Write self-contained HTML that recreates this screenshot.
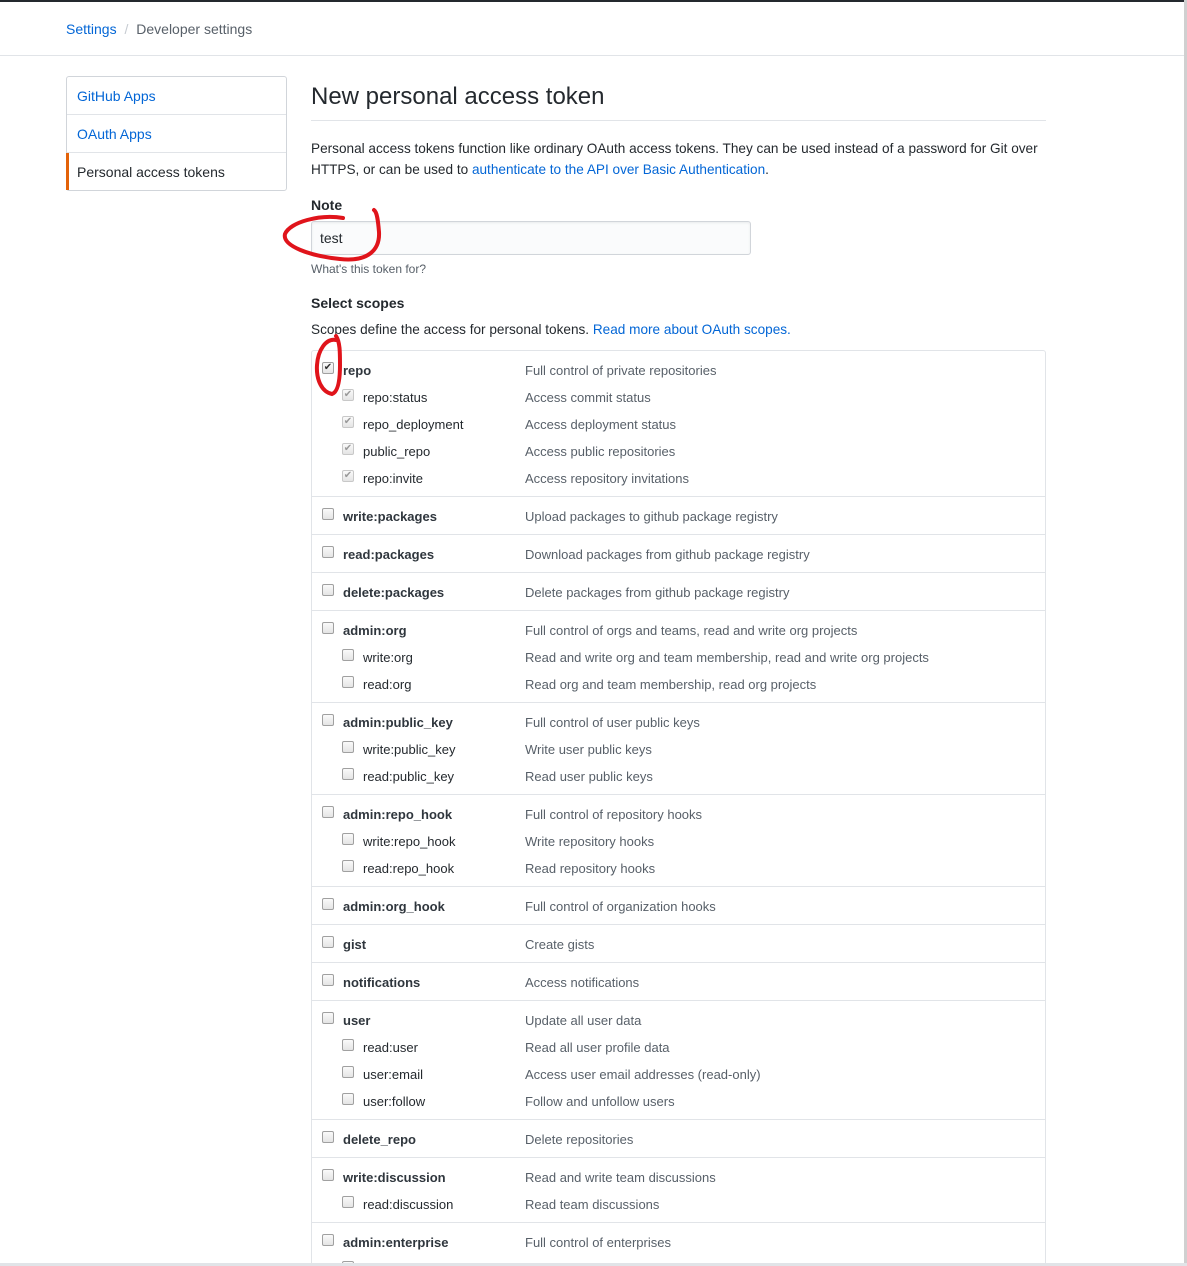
<!DOCTYPE html>
<html style="width:1187px;height:1266px;overflow:hidden"><head><meta charset="utf-8"><style>
*{margin:0;padding:0;box-sizing:border-box}
body{width:1187px;height:1266px;background:#fff;font-family:"Liberation Sans",sans-serif;color:#24292e;position:relative;overflow:hidden}
.a{position:absolute;white-space:nowrap}
.l{color:#0366d6}
.t{position:absolute;font-size:13px;line-height:18px;white-space:nowrap;margin-top:1px}
.n{font-weight:bold;color:#2f363d;left:343px}
.s{color:#24292e;left:363px}
.d{color:#586069;left:525px}
.cb{position:absolute;width:12px;height:12px;border:1px solid #a0a0a0;border-radius:2px;background:linear-gradient(#fafafa,#e4e4e4)}
.ck{font-size:10px;line-height:10px;text-align:center;color:#333}
.ck.g{color:#9a9a9a;border-color:#c8c8c8}
.hr{position:absolute;left:312px;width:733px;height:1px;background:#e1e4e8}
</style></head><body>
<div class="a" style="left:0;top:0;width:1187px;height:2px;background:#24292e"></div>
<div class="a" style="left:1184px;top:0;width:3px;height:1266px;background:#d0d0d0"></div>
<div class="a" style="left:66px;top:20px;font-size:14px;line-height:18px"><span class="l">Settings</span> <span style="color:#c6cbd1;margin:0 4px">/</span> <span style="color:#586069">Developer settings</span></div>
<div class="a" style="left:0;top:55px;width:1184px;height:1px;background:#e1e4e8"></div>

<div class="a" style="left:66px;top:76px;width:221px;height:115px;border:1px solid #d1d5da;border-radius:3px"></div>
<div class="a" style="left:67px;top:114px;width:219px;height:1px;background:#e1e4e8"></div>
<div class="a" style="left:67px;top:152px;width:219px;height:1px;background:#e1e4e8"></div>
<div class="a" style="left:66px;top:153px;width:3px;height:37px;background:#e36209"></div>
<div class="a l" style="left:77px;top:87px;font-size:14px;line-height:18px">GitHub Apps</div>
<div class="a l" style="left:77px;top:125px;font-size:14px;line-height:18px">OAuth Apps</div>
<div class="a" style="left:77px;top:163px;font-size:14px;line-height:18px">Personal access tokens</div>

<div class="a" style="left:311px;top:82px;font-size:24px;line-height:30px">New personal access token</div>
<div class="a" style="left:311px;top:120px;width:735px;height:1px;background:#e1e4e8"></div>
<div class="a" style="left:311px;top:138px;font-size:13.6px;line-height:21px">Personal access tokens function like ordinary OAuth access tokens. They can be used instead of a password for Git over<br>HTTPS, or can be used to <span class="l">authenticate to the API over Basic Authentication</span>.</div>
<div class="a" style="left:311px;top:196px;font-size:14px;font-weight:bold;line-height:18px">Note</div>
<div class="a" style="left:311px;top:221px;width:440px;height:34px;border:1px solid #d1d5da;border-radius:3px;background:#fafbfc;box-shadow:inset 0 1px 2px rgba(27,31,35,.075)"></div>
<div class="a" style="left:320px;top:229px;font-size:14px;line-height:18px">test</div>
<div class="a" style="left:311px;top:261px;font-size:12px;line-height:16px;color:#586069">What's this token for?</div>
<div class="a" style="left:311px;top:294px;font-size:14px;font-weight:bold;line-height:18px">Select scopes</div>
<div class="a" style="left:311px;top:321px;font-size:13.6px;line-height:18px">Scopes define the access for personal tokens. <span class="l">Read more about OAuth scopes.</span></div>

<div class="a" style="left:311px;top:350px;width:735px;height:930px;border:1px solid #e1e4e8;border-radius:3px"></div>

<div class="cb ck" style="left:322px;top:362px">✔</div><div class="t n" style="top:361px">repo</div><div class="t d" style="top:361px">Full control of private repositories</div>
<div class="cb ck g" style="left:342px;top:389px">✔</div><div class="t s" style="top:388px">repo:status</div><div class="t d" style="top:388px">Access commit status</div>
<div class="cb ck g" style="left:342px;top:416px">✔</div><div class="t s" style="top:415px">repo_deployment</div><div class="t d" style="top:415px">Access deployment status</div>
<div class="cb ck g" style="left:342px;top:443px">✔</div><div class="t s" style="top:442px">public_repo</div><div class="t d" style="top:442px">Access public repositories</div>
<div class="cb ck g" style="left:342px;top:470px">✔</div><div class="t s" style="top:469px">repo:invite</div><div class="t d" style="top:469px">Access repository invitations</div>
<div class="hr" style="top:496px"></div>
<div class="cb" style="left:322px;top:508px"></div><div class="t n" style="top:507px">write:packages</div><div class="t d" style="top:507px">Upload packages to github package registry</div>
<div class="hr" style="top:534px"></div>
<div class="cb" style="left:322px;top:546px"></div><div class="t n" style="top:545px">read:packages</div><div class="t d" style="top:545px">Download packages from github package registry</div>
<div class="hr" style="top:572px"></div>
<div class="cb" style="left:322px;top:584px"></div><div class="t n" style="top:583px">delete:packages</div><div class="t d" style="top:583px">Delete packages from github package registry</div>
<div class="hr" style="top:610px"></div>
<div class="cb" style="left:322px;top:622px"></div><div class="t n" style="top:621px">admin:org</div><div class="t d" style="top:621px">Full control of orgs and teams, read and write org projects</div>
<div class="cb" style="left:342px;top:649px"></div><div class="t s" style="top:648px">write:org</div><div class="t d" style="top:648px">Read and write org and team membership, read and write org projects</div>
<div class="cb" style="left:342px;top:676px"></div><div class="t s" style="top:675px">read:org</div><div class="t d" style="top:675px">Read org and team membership, read org projects</div>
<div class="hr" style="top:702px"></div>
<div class="cb" style="left:322px;top:714px"></div><div class="t n" style="top:713px">admin:public_key</div><div class="t d" style="top:713px">Full control of user public keys</div>
<div class="cb" style="left:342px;top:741px"></div><div class="t s" style="top:740px">write:public_key</div><div class="t d" style="top:740px">Write user public keys</div>
<div class="cb" style="left:342px;top:768px"></div><div class="t s" style="top:767px">read:public_key</div><div class="t d" style="top:767px">Read user public keys</div>
<div class="hr" style="top:794px"></div>
<div class="cb" style="left:322px;top:806px"></div><div class="t n" style="top:805px">admin:repo_hook</div><div class="t d" style="top:805px">Full control of repository hooks</div>
<div class="cb" style="left:342px;top:833px"></div><div class="t s" style="top:832px">write:repo_hook</div><div class="t d" style="top:832px">Write repository hooks</div>
<div class="cb" style="left:342px;top:860px"></div><div class="t s" style="top:859px">read:repo_hook</div><div class="t d" style="top:859px">Read repository hooks</div>
<div class="hr" style="top:886px"></div>
<div class="cb" style="left:322px;top:898px"></div><div class="t n" style="top:897px">admin:org_hook</div><div class="t d" style="top:897px">Full control of organization hooks</div>
<div class="hr" style="top:924px"></div>
<div class="cb" style="left:322px;top:936px"></div><div class="t n" style="top:935px">gist</div><div class="t d" style="top:935px">Create gists</div>
<div class="hr" style="top:962px"></div>
<div class="cb" style="left:322px;top:974px"></div><div class="t n" style="top:973px">notifications</div><div class="t d" style="top:973px">Access notifications</div>
<div class="hr" style="top:1000px"></div>
<div class="cb" style="left:322px;top:1012px"></div><div class="t n" style="top:1011px">user</div><div class="t d" style="top:1011px">Update all user data</div>
<div class="cb" style="left:342px;top:1039px"></div><div class="t s" style="top:1038px">read:user</div><div class="t d" style="top:1038px">Read all user profile data</div>
<div class="cb" style="left:342px;top:1066px"></div><div class="t s" style="top:1065px">user:email</div><div class="t d" style="top:1065px">Access user email addresses (read-only)</div>
<div class="cb" style="left:342px;top:1093px"></div><div class="t s" style="top:1092px">user:follow</div><div class="t d" style="top:1092px">Follow and unfollow users</div>
<div class="hr" style="top:1119px"></div>
<div class="cb" style="left:322px;top:1131px"></div><div class="t n" style="top:1130px">delete_repo</div><div class="t d" style="top:1130px">Delete repositories</div>
<div class="hr" style="top:1157px"></div>
<div class="cb" style="left:322px;top:1169px"></div><div class="t n" style="top:1168px">write:discussion</div><div class="t d" style="top:1168px">Read and write team discussions</div>
<div class="cb" style="left:342px;top:1196px"></div><div class="t s" style="top:1195px">read:discussion</div><div class="t d" style="top:1195px">Read team discussions</div>
<div class="hr" style="top:1222px"></div>
<div class="cb" style="left:322px;top:1234px"></div><div class="t n" style="top:1233px">admin:enterprise</div><div class="t d" style="top:1233px">Full control of enterprises</div>
<div class="cb" style="left:342px;top:1261px"></div>
<div class="a" style="left:0;top:1263px;width:1187px;height:3px;background:#e1e4e8"></div>

<svg class="a" style="left:0;top:0" width="1187" height="1266" viewBox="0 0 1187 1266">
<path d="M343 218 C 320 214, 290 222, 285 234 C 282 246, 310 256, 340 259 C 368 262, 380 250, 379 232 C 378 220, 377 212, 374 210" fill="none" stroke="#e0141b" stroke-width="4" stroke-linecap="round"/>
<path d="M336 340 C 326 338, 318 350, 317 365 C 316 380, 322 392, 332 394 C 338 392, 340 380, 340 365 C 340 352, 340 342, 336 336" fill="none" stroke="#e0141b" stroke-width="4" stroke-linecap="round"/>
</svg>
</body></html>
